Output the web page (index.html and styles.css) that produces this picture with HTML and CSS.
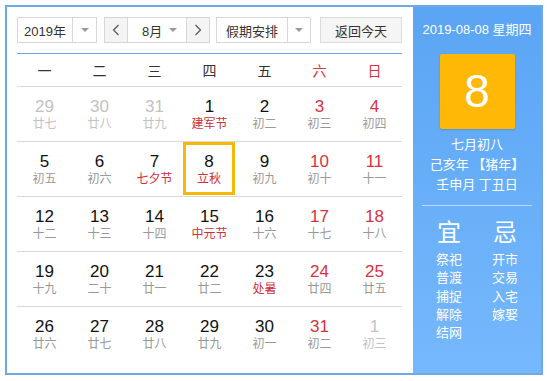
FILE: index.html
```html
<!DOCTYPE html>
<html lang="zh-CN">
<head>
  <meta charset="UTF-8" />
  <title>万年历</title>
  <link rel="stylesheet" href="styles.css">
</head>
<body>
  <div class="calendar">
    <div class="main">
      <!-- 顶部选择栏 -->
      <div class="toolbar">
        <div class="select year-select">
          <span class="select-text">2019年</span>
          <span class="select-arrow"><i class="caret"></i></span>
        </div>
        <div class="month-group">
          <span class="nav-btn">
            <svg width="8" height="12" viewBox="0 0 8 12"><polyline points="6.5,1 1.5,6 6.5,11" fill="none" stroke="#555" stroke-width="1.2"/></svg>
          </span>
          <span class="month-field">8月<i class="caret"></i></span>
          <span class="nav-btn">
            <svg width="8" height="12" viewBox="0 0 8 12"><polyline points="1.5,1 6.5,6 1.5,11" fill="none" stroke="#555" stroke-width="1.2"/></svg>
          </span>
        </div>
        <div class="select holiday-select">
          <span class="select-text">假期安排</span>
          <span class="select-arrow"><i class="caret"></i></span>
        </div>
        <button class="today-btn">返回今天</button>
      </div>

      <div class="week-head">
        <span>一</span><span>二</span><span>三</span><span>四</span><span>五</span>
        <span class="weekend">六</span><span class="weekend">日</span>
      </div>

      <div class="days">
        <div class="row">
          <div class="day other"><b>29</b><em>廿七</em></div>
          <div class="day other"><b>30</b><em>廿八</em></div>
          <div class="day other"><b>31</b><em>廿九</em></div>
          <div class="day"><b>1</b><em class="fest">建军节</em></div>
          <div class="day"><b>2</b><em>初二</em></div>
          <div class="day weekend"><b>3</b><em>初三</em></div>
          <div class="day weekend"><b>4</b><em>初四</em></div>
        </div>
        <div class="row">
          <div class="day"><b>5</b><em>初五</em></div>
          <div class="day"><b>6</b><em>初六</em></div>
          <div class="day"><b>7</b><em class="fest">七夕节</em></div>
          <div class="day selected"><b>8</b><em class="fest">立秋</em></div>
          <div class="day"><b>9</b><em>初九</em></div>
          <div class="day weekend"><b>10</b><em>初十</em></div>
          <div class="day weekend"><b>11</b><em>十一</em></div>
        </div>
        <div class="row">
          <div class="day"><b>12</b><em>十二</em></div>
          <div class="day"><b>13</b><em>十三</em></div>
          <div class="day"><b>14</b><em>十四</em></div>
          <div class="day"><b>15</b><em class="fest">中元节</em></div>
          <div class="day"><b>16</b><em>十六</em></div>
          <div class="day weekend"><b>17</b><em>十七</em></div>
          <div class="day weekend"><b>18</b><em>十八</em></div>
        </div>
        <div class="row">
          <div class="day"><b>19</b><em>十九</em></div>
          <div class="day"><b>20</b><em>二十</em></div>
          <div class="day"><b>21</b><em>廿一</em></div>
          <div class="day"><b>22</b><em>廿二</em></div>
          <div class="day"><b>23</b><em class="fest">处暑</em></div>
          <div class="day weekend"><b>24</b><em>廿四</em></div>
          <div class="day weekend"><b>25</b><em>廿五</em></div>
        </div>
        <div class="row">
          <div class="day"><b>26</b><em>廿六</em></div>
          <div class="day"><b>27</b><em>廿七</em></div>
          <div class="day"><b>28</b><em>廿八</em></div>
          <div class="day"><b>29</b><em>廿九</em></div>
          <div class="day"><b>30</b><em>初一</em></div>
          <div class="day weekend"><b>31</b><em>初二</em></div>
          <div class="day other"><b>1</b><em>初三</em></div>
        </div>
      </div>
    </div>

    <!-- 右侧详情 -->
    <div class="side">
      <div class="side-date">2019-08-08 星期四</div>
      <div class="big-day">8</div>
      <div class="lunar">
        <p>七月初八</p>
        <p>己亥年 【猪年】</p>
        <p>壬申月 丁丑日</p>
      </div>
      <div class="divider"></div>
      <div class="yiji">
        <div class="yiji-col">
          <h2>宜</h2>
          <p>祭祀</p><p>普渡</p><p>捕捉</p><p>解除</p><p>结网</p>
        </div>
        <div class="yiji-col">
          <h2>忌</h2>
          <p>开市</p><p>交易</p><p>入宅</p><p>嫁娶</p>
        </div>
      </div>
    </div>
  </div>
</body>
</html>
```

FILE: styles.css
```css
html, body {
  margin: 0;
  padding: 0;
  background: #fff;
  font-family: "Liberation Sans", "Noto Sans CJK SC", sans-serif;
  color: #333;
}

.calendar {
  margin: 5px;
  width: 538px;
  height: 370px;
  box-sizing: border-box;
  border: 2px solid #6fa8e2;
  display: flex;
}

.main {
  width: 406px;
  box-sizing: border-box;
  padding: 10px 11px 0 10px;
}

/* toolbar */
.toolbar {
  display: flex;
  height: 26px;
  margin-bottom: 10px;
  font-size: 13px;
}

.select, .month-group {
  display: flex;
  box-sizing: border-box;
  border: 1px solid #d6d6d6;
  background: #fff;
}

.select-text {
  display: flex;
  align-items: center;
  justify-content: center;
  border-right: 1px solid #d6d6d6;
}

.select-arrow {
  flex: 1;
  display: flex;
  align-items: center;
  justify-content: center;
}

.caret {
  display: inline-block;
  width: 0;
  height: 0;
  border-left: 4px solid transparent;
  border-right: 4px solid transparent;
  border-top: 4px solid #999;
}

.year-select { width: 80px; margin-right: 7px; }
.year-select .select-text { width: 54px; }

.month-group { width: 106px; margin-right: 6px; }

.nav-btn {
  width: 22px;
  display: flex;
  align-items: center;
  justify-content: center;
  background: #f4f4f4;
}

.month-field {
  flex: 1;
  display: flex;
  align-items: center;
  justify-content: space-between;
  padding: 0 9px 0 14px;
  border-left: 1px solid #d6d6d6;
  border-right: 1px solid #d6d6d6;
}

.holiday-select { width: 95px; margin-right: 9px; }
.holiday-select .select-text { width: 70px; }

.today-btn {
  width: 82px;
  height: 26px;
  box-sizing: border-box;
  border: 1px solid #dcdcdc;
  background: #f5f5f5;
  color: #333;
  font-family: inherit;
  font-size: 13px;
  padding: 0;
}

/* week header */
.week-head {
  display: grid;
  grid-template-columns: repeat(7, 55px);
  height: 34px;
  box-sizing: border-box;
  border-top: 1px solid #5ea6ef;
  border-bottom: 1px solid #d9d9d9;
  font-size: 14px;
  align-items: center;
  justify-items: center;
}

.week-head .weekend { color: #d8323e; }

/* day grid */
.row {
  display: grid;
  grid-template-columns: repeat(7, 55px);
  height: 55px;
  box-sizing: border-box;
  border-bottom: 1px solid #d9d9d9;
}

.row:last-child { border-bottom: none; }

.day {
  display: flex;
  flex-direction: column;
  align-items: center;
  padding-top: 11px;
  box-sizing: border-box;
}

.day b {
  font-weight: normal;
  font-size: 17px;
  line-height: 18px;
  color: #111;
}

.day em {
  font-style: normal;
  font-size: 12px;
  line-height: 16px;
  color: #999;
}

.day em.fest { color: #cc2e3b; }
.day.weekend b { color: #d8323e; }
.day.other b { color: #c2c2c2; }
.day.other em { color: #c2c2c2; }

.day.selected {
  border: 3px solid #f7b808;
  margin: 0 2px 1px 1px;
  padding-top: 8px;
}

/* side panel */
.side {
  flex: 1;
  background: linear-gradient(to bottom, #5aa5f4, #76b8fd);
  color: #fff;
  display: flex;
  flex-direction: column;
  align-items: center;
  padding-top: 13px;
}

.side-date {
  font-size: 13px;
  line-height: 20px;
}

.big-day {
  width: 75px;
  height: 75px;
  margin-top: 14px;
  background: #ffb806;
  border-radius: 2px;
  font-size: 46px;
  line-height: 75px;
  text-align: center;
  box-shadow: 0 1px 2px rgba(0, 0, 0, 0.15);
}

.lunar {
  margin-top: 6px;
  text-align: center;
}

.lunar p {
  margin: 0;
  font-size: 13px;
  line-height: 20px;
}

.divider {
  width: 110px;
  height: 1px;
  margin-top: 10px;
  background: rgba(255, 255, 255, 0.55);
}

.yiji {
  display: flex;
  gap: 16px;
  margin-top: 13px;
}

.yiji-col {
  width: 40px;
  text-align: center;
}

.yiji h2 {
  margin: 0 0 4px;
  font-size: 24px;
  line-height: 28px;
  font-weight: normal;
}

.yiji p {
  margin: 0;
  font-size: 13px;
  line-height: 18.3px;
}
```
